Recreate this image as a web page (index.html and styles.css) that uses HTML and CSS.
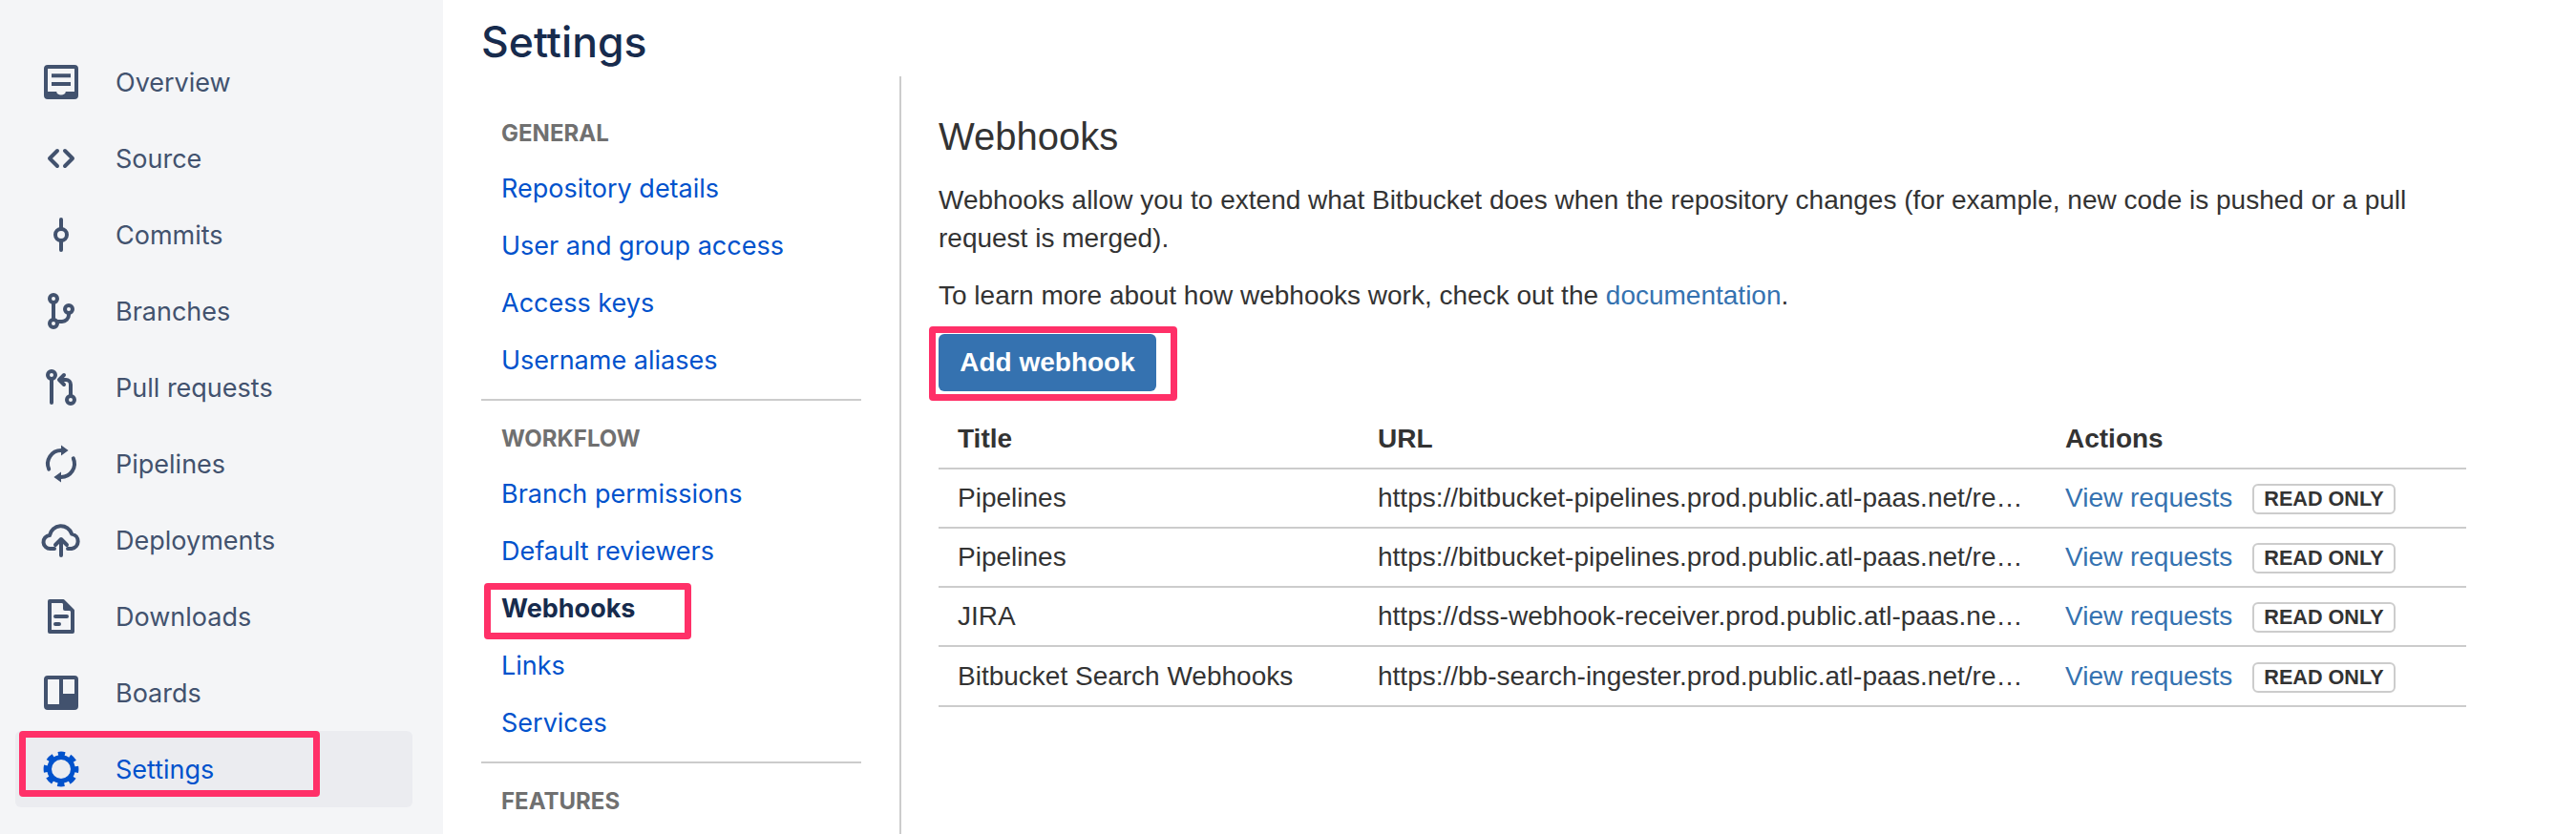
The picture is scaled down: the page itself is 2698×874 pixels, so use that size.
FILE: index.html
```html
<!DOCTYPE html>
<html lang="en">
<head>
<meta charset="utf-8">
<title>Settings – Webhooks</title>
<link rel="stylesheet" href="styles.css">
</head>
<body>
<div class="page">
  <aside class="sidebar">
    <a class="side-item"><svg class="side-icon" viewBox="0 0 24 24"><path class="solid" fill-rule="evenodd" d="M5 3h14a2 2 0 0 1 2 2v14a2 2 0 0 1-2 2H5a2 2 0 0 1-2-2V5a2 2 0 0 1 2-2zm0 2v12h4.6a2.4 1.8 0 0 0 4.8 0H19V5zm2 2.6h10v2H7zm0 4.4h10v2H7z"/></svg><span>Overview</span></a>
    <a class="side-item"><svg class="side-icon" viewBox="0 0 24 24"><path class="line" d="M10 8l-4 4 4 4M14 8l4 4-4 4"/></svg><span>Source</span></a>
    <a class="side-item"><svg class="side-icon" viewBox="0 0 24 24"><path class="line" d="M12 4v5M12 15v5"/><circle class="line" cx="12" cy="12" r="3"/></svg><span>Commits</span></a>
    <a class="side-item"><svg class="side-icon" viewBox="0 0 24 24"><circle class="line" cx="8" cy="5.5" r="2"/><circle class="line" cx="8" cy="18.5" r="2"/><circle class="line" cx="16" cy="11" r="2"/><path class="line" d="M8 8v8M16 13v1a3.5 3.5 0 0 1-3.5 3.5H10"/></svg><span>Branches</span></a>
    <a class="side-item"><svg class="side-icon" viewBox="0 0 24 24"><circle class="line" cx="7" cy="5.5" r="2"/><circle class="line" cx="17" cy="18.5" r="2"/><path class="line" d="M7 8v12M11.5 8h3a2.5 2.5 0 0 1 2.5 2.5V16M13.5 5.5 11 8l2.5 2.5"/></svg><span>Pull requests</span></a>
    <a class="side-item"><svg class="side-icon" viewBox="0 0 24 24"><path class="line" d="M5.6 14.8A7 7 0 0 1 12 5M18.4 9.2A7 7 0 0 1 12 19"/><path class="solid" d="M12 2.2 15.8 5 12 7.8zM12 16.2 8.2 19l3.8 2.8z"/></svg><span>Pipelines</span></a>
    <a class="side-item"><svg class="side-icon" viewBox="0 0 24 24"><path class="line" d="M8.5 16.5h-2A3.5 3.5 0 0 1 6 9.5a6 6 0 0 1 11.6-.7 3.9 3.9 0 0 1-.1 7.7h-2M12 20v-8M9 14.5l3-3 3 3"/></svg><span>Deployments</span></a>
    <a class="side-item"><svg class="side-icon" viewBox="0 0 24 24"><path class="line" d="M6 4h7l5 5v11H6zM9 12h6M9 16h2"/><path class="solid" d="M13 3l6 6h-5a1 1 0 0 1-1-1z"/></svg><span>Downloads</span></a>
    <a class="side-item"><svg class="side-icon" viewBox="0 0 24 24"><path class="solid" fill-rule="evenodd" d="M5 3h14a2 2 0 0 1 2 2v14a2 2 0 0 1-2 2H5a2 2 0 0 1-2-2V5a2 2 0 0 1 2-2zm0 2v13h6V5zm8 0v7.5h6V5z"/></svg><span>Boards</span></a>
    <a class="side-item side-item-active"><svg class="side-icon" viewBox="0 0 24 24"><circle class="gear-ring" cx="12" cy="12" r="6.2"/><circle class="gear-teeth" cx="12" cy="12" r="8"/></svg><span>Settings</span><i class="callout callout-side"></i></a>
  </aside>
  <main class="main">
    <h1 class="page-title">Settings</h1>
    <div class="columns">
      <nav class="subnav">
        <section class="subnav-section">
          <h3 class="subnav-title">GENERAL</h3>
          <a class="subnav-link">Repository details</a>
          <a class="subnav-link">User and group access</a>
          <a class="subnav-link">Access keys</a>
          <a class="subnav-link">Username aliases</a>
        </section>
        <section class="subnav-section">
          <h3 class="subnav-title">WORKFLOW</h3>
          <a class="subnav-link">Branch permissions</a>
          <a class="subnav-link">Default reviewers</a>
          <a class="subnav-link subnav-link-active">Webhooks<i class="callout callout-nav"></i></a>
          <a class="subnav-link">Links</a>
          <a class="subnav-link">Services</a>
        </section>
        <section class="subnav-section subnav-section-last">
          <h3 class="subnav-title">FEATURES</h3>
        </section>
      </nav>
      <div class="content">
        <h2 class="content-title">Webhooks</h2>
        <p class="text">Webhooks allow you to extend what Bitbucket does when the repository changes (for example, new code is pushed or a pull request is merged).</p>
        <p class="text">To learn more about how webhooks work, check out the <a class="link">documentation</a>.</p>
        <div class="btn-wrap"><button class="btn">Add webhook</button><i class="callout callout-btn"></i></div>
        <table class="hooks">
          <colgroup><col class="col-title"><col class="col-url"><col class="col-actions"></colgroup>
          <thead><tr><th>Title</th><th>URL</th><th>Actions</th></tr></thead>
          <tbody>
            <tr><td>Pipelines</td><td class="url">https://bitbucket-pipelines.prod.public.atl-paas.net/rest/bitbucket/event/connect/onpush</td><td><a class="link">View requests</a><span class="badge">READ ONLY</span></td></tr>
            <tr><td>Pipelines</td><td class="url">https://bitbucket-pipelines.prod.public.atl-paas.net/rest/bitbucket/event/connect/onstatus</td><td><a class="link">View requests</a><span class="badge">READ ONLY</span></td></tr>
            <tr><td>JIRA</td><td class="url">https://dss-webhook-receiver.prod.public.atl-paas.net/bitbucket/webhook/receiver/events</td><td><a class="link">View requests</a><span class="badge">READ ONLY</span></td></tr>
            <tr class="row-last"><td>Bitbucket Search Webhooks</td><td class="url">https://bb-search-ingester.prod.public.atl-paas.net/rest/webhook/bitbucket/repository/push</td><td><a class="link">View requests</a><span class="badge">READ ONLY</span></td></tr>
          </tbody>
        </table>
      </div>
    </div>
  </main>
</div>
</body>
</html>
```
FILE: styles.css
```css
* { box-sizing: border-box; }
html, body { margin: 0; height: 874px; overflow: hidden; background: #fff; }
.page { display: flex; height: 874px; font-family: Inter, "Liberation Sans", sans-serif; }

.sidebar { flex: 0 0 464px; background: #f4f5f7; padding: 46px 32px 0 16px; }
.side-item { position: relative; display: flex; align-items: center; height: 80px; padding-left: 24px; gap: 33px; color: #42526e; font-size: 27px; border-radius: 6px; }
.side-item-active { background: #ebecf0; color: #0052cc; }
.side-icon { width: 48px; height: 48px; flex: none; }
.line { fill: none; stroke: currentColor; stroke-width: 2; stroke-linecap: round; stroke-linejoin: round; }
.solid { fill: currentColor; }
.gear-ring { fill: none; stroke: currentColor; stroke-width: 2.4; }
.gear-teeth { fill: none; stroke: currentColor; stroke-width: 2.4; stroke-dasharray: 3.6 2.68; stroke-dashoffset: 1.8; }

.callout { position: absolute; display: block; border: 7px solid #ff3068; border-radius: 4px; pointer-events: none; }
.callout-side { left: 4px; top: 0; width: 315px; height: 69px; }
.callout-nav { left: -18px; top: 3px; width: 217px; height: 59px; }
.callout-btn { left: -10px; top: -8px; width: 260px; height: 78px; }

.main { flex: 1; padding-left: 40px; min-width: 0; }
.page-title { margin: 0; height: 80px; font-size: 44.5px; line-height: 88px; font-weight: 500; color: #172b4d; }
.columns { display: flex; height: 794px; }
.subnav { flex: 0 0 398px; padding-top: 30px; }
.subnav-section { border-bottom: 2px solid #ccc; padding-bottom: 10px; margin-bottom: 10px; }
.subnav-section-last { border-bottom: 0; }
.subnav-title { margin: 0; height: 58px; padding-left: 21px; font-size: 24px; line-height: 60px; font-weight: 700; color: #707070; }
.subnav-link { display: block; position: relative; height: 60px; margin-left: 21px; font-size: 27px; line-height: 60px; color: #0052cc; }
.subnav-link-active { font-weight: 700; color: #172b4d; }

.content { flex: 1; margin-left: 40px; border-left: 2px solid #ccc; padding: 33px 0 0 39px; font-family: "Liberation Sans", Arial, sans-serif; color: #333; font-size: 28px; min-width: 0; }
.content-title { margin: 0 0 17px; font-size: 40px; line-height: 60px; font-weight: 400; color: #333; }
.text { margin: 0 0 20px; line-height: 40px; width: 1600px; }
.link { color: #3572b0; }
.btn-wrap { position: relative; width: 228px; height: 60px; }
.btn { display: block; width: 228px; height: 60px; padding: 0; border: 0; border-radius: 6px; background: #3572b0; color: #fff; font: 700 28px "Liberation Sans", Arial, sans-serif; }

.hooks { margin-top: 20px; width: 1600px; table-layout: fixed; border-collapse: separate; border-spacing: 0; }
.col-title { width: 440px; }
.col-url { width: 720px; }
.col-actions { width: 440px; }
.hooks th, .hooks td { height: 62px; padding: 0 20px; border-bottom: 2px solid #ccc; text-align: left; white-space: nowrap; overflow: hidden; }
.hooks th { font-weight: 700; }
.hooks .row-last td { height: 63px; padding-top: 1px; }
.hooks .url { text-overflow: ellipsis; }
.badge { display: inline-block; margin-left: 21px; height: 32px; padding: 0 10px; border: 2px solid #ccc; border-radius: 6px; font-size: 21.6px; line-height: 28px; font-weight: 700; color: #333; vertical-align: 1px; }
```
